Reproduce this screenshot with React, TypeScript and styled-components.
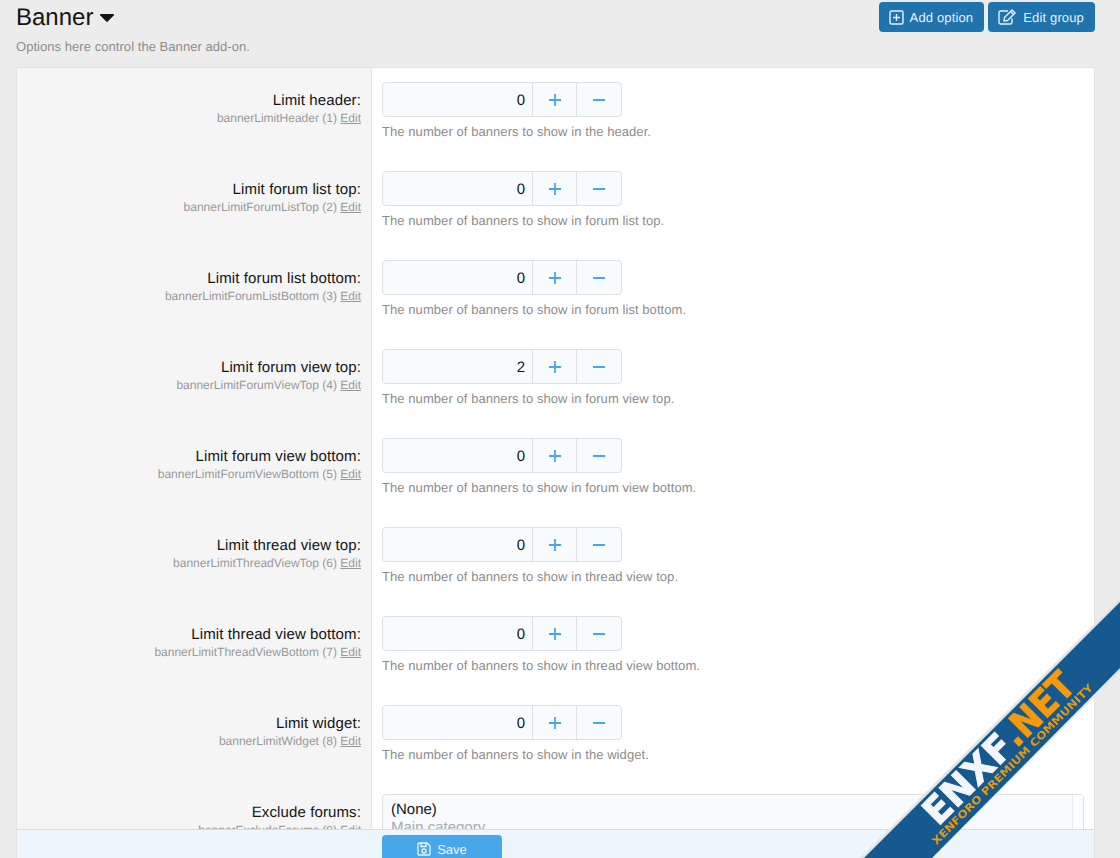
import React from "react";
import styled, { createGlobalStyle } from "styled-components";

const Global = createGlobalStyle`
  html, body { margin: 0; padding: 0; height: 100%; background: #ececec; overflow: hidden; }
  body { font-family: "Liberation Sans", Arial, sans-serif; color: #141414; text-rendering: geometricPrecision; }
`;
const Page = styled.div`
  height: 858px; box-sizing: border-box; padding: 2px 25px 0 16px;
  display: flex; flex-direction: column; overflow: hidden;
`;
const Header = styled.header`display: flex; justify-content: space-between; align-items: flex-start; height: 65px; flex: none;`;
const TitleBlock = styled.div`display: flex; flex-direction: column;`;
const Title = styled.h1`
  margin: 0; font-size: 24px; line-height: 32px; font-weight: 400; color: #141414;
  display: flex; align-items: center; gap: 7px;
`;
const Desc = styled.p`margin: 5px 0 0; font-size: 13px; line-height: 16px; letter-spacing: 0.05px; color: #8c8c8c;`;
const Actions = styled.div`display: flex; gap: 4px;`;
const ActionButton = styled.button`
  height: 30px; box-sizing: border-box; border: 0; border-radius: 4px; padding: 0 11px 0 10px;
  background: #1f74ad; color: #e8f1f8; font: 13px "Liberation Sans", Arial, sans-serif; text-rendering: geometricPrecision;
  letter-spacing: 0.15px; display: flex; align-items: center; gap: 6px;
`;
const Card = styled.main`
  flex: 1; min-height: 0; display: flex; flex-direction: column;
  background: #fff; border: 1px solid #e2e2e2; border-bottom: 0; border-radius: 4px 4px 0 0; overflow: hidden;
`;
const Scroller = styled.div`flex: 1; min-height: 0; overflow: hidden; display: grid; grid-template-columns: 355px 1fr; align-content: start;
  background: linear-gradient(to right, #f5f5f5 354px, #e5e5e5 354px, #e5e5e5 355px, #fff 355px);`;
const LabelCell = styled.div`padding: 23px 11px 0 10px; height: 89px; box-sizing: border-box; text-align: right;`;
const Label = styled.div`font-size: 15px; line-height: 19px; letter-spacing: 0.12px; color: #141414;`;
const Hint = styled.div`font-size: 12px; line-height: 16px; color: #999;`;
const EditLink = styled.span`text-decoration: underline;`;
const FieldCell = styled.div`padding: 14px 0 0 10px; height: 89px; box-sizing: border-box;`;
const Stepper = styled.div`
  width: 240px; height: 35px; box-sizing: border-box; display: flex;
  border: 1px solid #dde1e4; border-radius: 4px; background: #f7fbfe; overflow: hidden;
`;
const Value = styled.div`flex: 1; text-align: right; padding-right: 7px; font-size: 15px; line-height: 35px; color: #141414;`;
const StepButton = styled.div<{ $width: number }>`
  width: ${(p) => p.$width}px; box-sizing: border-box; flex: none; border-left: 1px solid #dde1e4; display: flex; align-items: center; justify-content: center;
`;
const Explain = styled.div`margin-top: 6px; font-size: 13px; line-height: 18px; letter-spacing: 0.07px; color: #8c8c8c;`;
const ListBox = styled.div`
  margin-right: 10px; height: 120px; box-sizing: border-box; display: flex; border: 1px solid #dde1e4; border-radius: 4px; background: #f7fbfe;
`;
const ListItems = styled.div`flex: 1; padding: 6px 8px; font-size: 15px; line-height: 18px;`;
const ListMuted = styled.div`color: #aaa;`;
const ScrollTrack = styled.div`width: 10px; border-left: 1px solid #e8ecef; background: #fbfcfd;`;
const Footer = styled.footer`
  height: 29px; flex: none; box-sizing: border-box; border-top: 1px solid #d8dcdf; background: #edf6fd;
  padding: 5px 0 0 365px; overflow: hidden;
`;
const SaveButton = styled.button`
  width: 120px; height: 28px; border: 0; border-radius: 4px; background: #47a7eb; color: #edf6fd;
  font: 13px "Liberation Sans", Arial, sans-serif; text-rendering: geometricPrecision; display: flex; align-items: center; justify-content: center; gap: 6px;
`;
const RibbonSvg = styled.svg`position: fixed; left: 860px; top: 598px; pointer-events: none;`;

const rows: [string, string, number, number, string][] = [
  ["Limit header:", "bannerLimitHeader", 1, 0, "the header"],
  ["Limit forum list top:", "bannerLimitForumListTop", 2, 0, "forum list top"],
  ["Limit forum list bottom:", "bannerLimitForumListBottom", 3, 0, "forum list bottom"],
  ["Limit forum view top:", "bannerLimitForumViewTop", 4, 2, "forum view top"],
  ["Limit forum view bottom:", "bannerLimitForumViewBottom", 5, 0, "forum view bottom"],
  ["Limit thread view top:", "bannerLimitThreadViewTop", 6, 0, "thread view top"],
  ["Limit thread view bottom:", "bannerLimitThreadViewBottom", 7, 0, "thread view bottom"],
  ["Limit widget:", "bannerLimitWidget", 8, 0, "the widget"],
];

const PlusIcon = () => (
  <svg width="12" height="12" viewBox="0 0 12 12"><path d="M6 0v12M0 6h12" stroke="#47a7eb" strokeWidth="1.8" fill="none" /></svg>
);
const MinusIcon = () => (
  <svg width="12" height="12" viewBox="0 0 12 12"><path d="M0 6h12" stroke="#47a7eb" strokeWidth="1.8" fill="none" /></svg>
);
const Caret = () => (
  <svg width="14" height="8" viewBox="0 0 14 8"><path d="M1 0h12c.9 0 1.3 1 .7 1.6L7.7 7.6c-.4.4-1 .4-1.4 0L.3 1.6C-.3 1 .1 0 1 0z" fill="#141414" /></svg>
);
const AddIcon = () => (
  <svg width="15" height="15" viewBox="0 0 15 15" fill="none" stroke="#e8f1f8" strokeWidth="1.4">
    <rect x="1" y="1" width="13" height="13" rx="1.5" /><path d="M7.5 4v7M4 7.5h7" />
  </svg>
);
const EditIcon = () => (
  <svg width="19" height="16" viewBox="0 0 19 16" fill="none" stroke="#e8f1f8" strokeWidth="1.4">
    <path d="M14 9.5V13.5a1.5 1.5 0 0 1-1.5 1.5h-10A1.5 1.5 0 0 1 1 13.5v-10A1.5 1.5 0 0 1 2.5 2H10" />
    <path d="M6.5 8.5L14 1l3 3-7.5 7.5-3.5.5z" /><path d="M12.5 2.5l3 3" />
  </svg>
);
const SaveIcon = () => (
  <svg width="14" height="14" viewBox="0 0 14 14" fill="none" stroke="#edf6fd" strokeWidth="1.3">
    <path d="M2 1h8l3 3v8a1 1 0 0 1-1 1H2a1 1 0 0 1-1-1V2a1 1 0 0 1 1-1z" /><path d="M4 1v3.5h5V1" /><circle cx="7" cy="9" r="2" />
  </svg>
);

export default function App() {
  return (
    <>
      <Global />
      <Page>
        <Header>
          <TitleBlock>
            <Title>Banner <Caret /></Title>
            <Desc>Options here control the Banner add-on.</Desc>
          </TitleBlock>
          <Actions>
            <ActionButton><AddIcon />Add option</ActionButton>
            <ActionButton><EditIcon />Edit group</ActionButton>
          </Actions>
        </Header>
        <Card>
          <Scroller>
            {rows.map(([label, id, n, value, where]) => (
              <React.Fragment key={id}>
                <LabelCell>
                  <Label>{label}</Label>
                  <Hint>{id} ({n}) <EditLink>Edit</EditLink></Hint>
                </LabelCell>
                <FieldCell>
                  <Stepper>
                    <Value>{value}</Value>
                    <StepButton $width={44}><PlusIcon /></StepButton>
                    <StepButton $width={45}><MinusIcon /></StepButton>
                  </Stepper>
                  <Explain>The number of banners to show in {where}.</Explain>
                </FieldCell>
              </React.Fragment>
            ))}
            <LabelCell>
              <Label>Exclude forums:</Label>
              <Hint>bannerExcludeForums (9) <EditLink>Edit</EditLink></Hint>
            </LabelCell>
            <FieldCell>
              <ListBox>
                <ListItems>
                  (None)
                  <ListMuted>Main category</ListMuted>
                </ListItems>
                <ScrollTrack />
              </ListBox>
            </FieldCell>
          </Scroller>
          <Footer>
            <SaveButton><SaveIcon />Save</SaveButton>
          </Footer>
        </Card>
      </Page>
      <RibbonSvg width="260" height="260" viewBox="0 0 260 260">
        <polygon points="260,0 260,74 72,260 0,260" fill="#dfe6ea" />
        <polygon points="260,4 260,70 72,260 4,260" fill="#15598e" />
        <g transform="translate(78 229) rotate(-45)" fontFamily="'DejaVu Sans', sans-serif" fontWeight="700">
          <text x="0" y="0" fontSize="37" textLength="110" lengthAdjust="spacingAndGlyphs" fill="#f3f6f9" stroke="#f3f6f9" strokeWidth="1">ENXF</text>
          <text x="111" y="0" fontSize="37" textLength="86" lengthAdjust="spacingAndGlyphs" fill="#f59a0c" stroke="#f59a0c" strokeWidth="1">.NET</text>
          <text x="-14" y="12" fontSize="10.5" textLength="222" lengthAdjust="spacingAndGlyphs" fill="#e8980f">XENFORO PREMIUM COMMUNITY</text>
        </g>
      </RibbonSvg>
    </>
  );
}
